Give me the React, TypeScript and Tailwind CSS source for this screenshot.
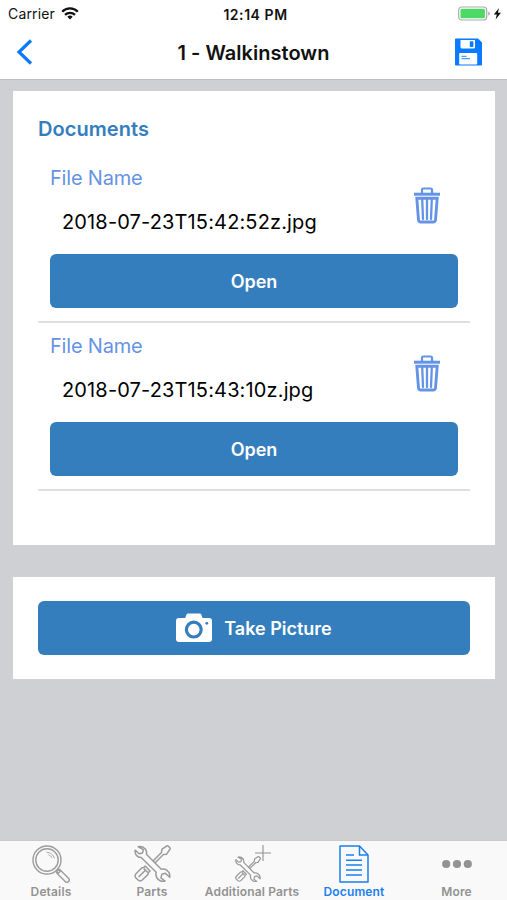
import * as React from "react";

interface DocumentItem {
  fileName: string;
}

const documents: DocumentItem[] = [
  { fileName: "2018-07-23T15:42:52z.jpg" },
  { fileName: "2018-07-23T15:43:10z.jpg" },
];

const WifiIcon = () => (
  <svg width="18" height="13" viewBox="0 0 18 13" fill="none" stroke="#111" strokeWidth="2.3">
    <path d="M1.2 4.7a11 11 0 0 1 15.6 0" />
    <path d="M4 7.8a7.2 7.2 0 0 1 10 0" />
    <path d="M6.3 9.7a4 4 0 0 1 5.4 0L9 12.6z" fill="#111" stroke="none" />
  </svg>
);

const BatteryIcon = () => (
  <svg width="45" height="16" viewBox="0 0 45 16">
    <rect x="0.7" y="1" width="28" height="13" rx="3" fill="#fff" stroke="#aaa" strokeWidth="1.2" />
    <rect x="2.5" y="2.8" width="24.4" height="9.4" rx="1.2" fill="#4cd964" />
    <path d="M30.4 5.5c1.8.6 1.8 3.6 0 4.2z" fill="#999" />
    <path d="M41 2l-5.2 6.6h3l-1.2 4.9 5.4-6.8h-3.1z" fill="#111" />
  </svg>
);

const SaveIcon = () => (
  <svg width="28" height="28" viewBox="0 0 28 28">
    <path d="M1 0.5h22l4 4V26.5a1 1 0 0 1-1 1H1a1 1 0 0 1-1-1v-25a1 1 0 0 1 1-1z" fill="#0a7aff" />
    <path d="M5.5 2H20V9a1.5 1.5 0 0 1-1.5 1.5H7A1.5 1.5 0 0 1 5.5 9z" fill="#fff" />
    <rect x="14.8" y="3.3" width="3.6" height="5.8" rx="0.8" fill="#0a7aff" />
    <rect x="4.2" y="15" width="18" height="11.5" rx="0.8" fill="#fff" />
    <path d="M6.5 18.4h5M6.5 20.6h8.5" stroke="#4a9cff" strokeWidth="1.4" />
  </svg>
);

const TrashIcon = () => (
  <svg width="26" height="37" viewBox="0 0 26 37" fill="none" stroke="#6593e6">
    <path d="M8 6V2.8A1.2 1.2 0 0 1 9.2 1.5h7.6A1.2 1.2 0 0 1 18 2.8V6" strokeWidth="2.2" />
    <path d="M0 7.2h26" strokeWidth="3" />
    <path d="M2.8 11.2h20.4L21.5 33a2.1 2.1 0 0 1-2.3 2H6.8a2.1 2.1 0 0 1-2.3-2z" strokeWidth="2.9" />
    <path d="M8.2 12l.8 20M13 12v20M17.8 12l-.8 20" strokeWidth="2.3" strokeLinecap="round" />
  </svg>
);

const CameraIcon = () => (
  <svg width="36" height="30" viewBox="0 0 36 30">
    <path
      d="M3 5h6.2l1.2-3.2A2 2 0 0 1 12.3.5h11.2a2 2 0 0 1 1.9 1.3L26.6 5H33a3 3 0 0 1 3 3v18a3 3 0 0 1-3 3H3a3 3 0 0 1-3-3V8a3 3 0 0 1 3-3z"
      fill="#fff"
    />
    <circle cx="17.8" cy="16.6" r="7.4" fill="none" stroke="#357ebd" strokeWidth="3.2" />
    <circle cx="30.8" cy="10.3" r="1.4" fill="#357ebd" />
  </svg>
);

const MagnifierIcon = () => (
  <svg width="38" height="38" viewBox="0 0 38 38" fill="none" stroke="#9c9c9c" strokeWidth="1.4">
    <circle cx="15" cy="15" r="14" />
    <circle cx="15" cy="15" r="11.2" />
    <path d="M14.5 7.3c3.8 0 7 2.6 7.9 6M16.5 9.8c1.7.6 2.7 1.5 3.4 3" strokeWidth="0.9" />
    <path d="M24.3 26.2l1.9-1.9 2 2-1.9 1.9z" />
    <path d="M25.4 28.7a2.2 2.2 0 0 1 3.3-3.3l7.8 7.8a2.2 2.2 0 0 1-3.3 3.3z" />
  </svg>
);

const ToolsIcon = ({ size }: { size: number }) => (
  <svg width={size} height={size} viewBox="0 0 38 38" fill="#f9f9f9" stroke="#9a9a9a" strokeWidth={size > 30 ? 1.5 : 1.8} strokeLinejoin="round">
    <path d="M19.5 16.5l8.7-8.7.4-3.3 4.8-3.3a1.6 1.6 0 0 1 2 .2l1.2 1.2a1.6 1.6 0 0 1 .2 2l-3.3 4.8-3.3.4-8.7 8.7z" />
    <path d="M11.5 21.6l5 5-1.4 1.4-.8 2.2-5.8 5.8a3 3 0 0 1-4.3 0l-2.2-2.2a3 3 0 0 1 0-4.3l5.9-5.9 2.2-.6z" />
    <path d="M4.8 32.8l6.6-6.6M10 24l4.2 4.2" fill="none" />
    <path d="M4.3 1.8C7.6.6 12.4 2.8 12.9 7c.1.8 0 1.6-.2 2.4L28 24.8c3.8-.9 8 1.6 8.7 5.8.2 1 .1 1.6 0 2.6l-4.5-4.2-3.6 1.1-1 3.7 4.3 3.3c-4.5 1.3-9.6-2.1-9.4-7.3 0-.7.1-1.2.3-1.8L7.4 12.8C3.6 13 .5 9.7 1.2 5.3L5.2 9l3.5-.8 1-3.5z" />
  </svg>
);

const PlusIcon = () => (
  <svg width="16" height="16" viewBox="0 0 16 16" stroke="#929292" strokeWidth="1.1">
    <path d="M8 0v16M0 8h16" />
  </svg>
);

const DocumentIcon = () => (
  <svg width="30" height="38" viewBox="0 0 30 38" fill="none" stroke="#1a80ee" strokeWidth="1.5">
    <path d="M1 1h19.5L29 10v27H1z" strokeLinejoin="round" />
    <path d="M20.5 1v9H29" />
    <path d="M7 10h8M7 15.2h16M7 20h16M7 25h16M7 30h16" />
  </svg>
);

const MoreIcon = () => (
  <svg width="30" height="10" viewBox="0 0 30 10" fill="#929292">
    <circle cx="4.2" cy="5" r="4.1" />
    <circle cx="15" cy="5" r="4.1" />
    <circle cx="25.8" cy="5" r="4.1" />
  </svg>
);

const StatusBar = () => (
  <div className="grid h-7 grid-cols-3 items-center">
    <div className="flex items-center gap-1.5 pb-px pl-2">
      <span className="text-[14px] tracking-[0.15px]">Carrier</span>
      <WifiIcon />
    </div>
    <span className="pl-1 text-center text-[14px] font-semibold tracking-[0.55px]">12:14 PM</span>
    <div className="flex justify-end pr-1 pb-px">
      <BatteryIcon />
    </div>
  </div>
);

const NavBar = () => (
  <div className="grid h-[50px] grid-cols-[60px_1fr_60px] items-center">
    <button className="pb-0.5 pl-4" aria-label="Back">
      <svg width="17" height="26" viewBox="0 0 17 26" fill="none" stroke="#0a7aff" strokeWidth="3.2">
        <path d="M15 1.5L3 13l12 11.5" />
      </svg>
    </button>
    <h1 className="pb-px text-center text-[20px] leading-6 font-semibold tracking-[0.03px]">1 - Walkinstown</h1>
    <button className="pb-0.5 pl-2" aria-label="Save">
      <SaveIcon />
    </button>
  </div>
);

const DocumentRow: React.FC<DocumentItem> = ({ fileName }) => (
  <li className="h-[168px] border-b-2 border-[#dedfe0] px-3">
    <div className="flex h-[99px] justify-between pt-[9px]">
      <div>
        <p className="text-[20px] leading-7 tracking-[-0.2px] text-[#6593e6]">File Name</p>
        <p className="mt-4 pl-3 text-[20px] leading-7 tracking-[0.14px] text-black">{fileName}</p>
      </div>
      <button className="mt-[23px] mr-[18px] h-[37px]" aria-label="Delete">
        <TrashIcon />
      </button>
    </div>
    <button className="h-[54px] w-full rounded-md bg-[#357ebd] text-[18px] font-semibold text-white">Open</button>
  </li>
);

interface TabProps {
  label: string;
  active?: boolean;
  children: React.ReactNode;
}

const Tab: React.FC<TabProps> = ({ label, active, children }) => (
  <button className={active ? "flex flex-col items-center text-[#1a80ee]" : "flex flex-col items-center text-[#929292]"}>
    <span className="flex h-[45px] items-center">{children}</span>
    <span className="text-[12px] leading-3 font-semibold tracking-[0.15px] whitespace-nowrap">{label}</span>
  </button>
);

export default function App() {
  return (
    <div className="flex h-[900px] w-[507px] flex-col overflow-hidden bg-[#cfd0d4] font-['Inter','Liberation_Sans',sans-serif] text-[#111]">
      <header className="h-20 shrink-0 border-b border-[#bebfc2] bg-white">
        <StatusBar />
        <NavBar />
      </header>

      <main className="flex flex-1 flex-col gap-8 pt-[11px] pr-3 pl-[13px]">
        <section className="h-[454px] bg-white px-[25px] pt-6">
          <h2 className="text-[20px] leading-7 font-semibold tracking-[0.05px] text-[#357ebd]">Documents</h2>
          <ul className="mt-3">
            {documents.map((doc) => (
              <DocumentRow key={doc.fileName} {...doc} />
            ))}
          </ul>
        </section>

        <section className="h-[102px] bg-white px-[25px] pt-6">
          <button className="flex h-[54px] w-full items-center justify-center gap-3 rounded-md bg-[#357ebd] text-[18px] font-semibold text-white">
            <CameraIcon />
            Take Picture
          </button>
        </section>
      </main>

      <nav className="grid h-[60px] shrink-0 grid-cols-[102px_100px_100px_104px_101px] border-t border-[#c8c9cc] bg-[#f9f9f9]">
        <Tab label="Details">
          <MagnifierIcon />
        </Tab>
        <Tab label="Parts">
          <ToolsIcon size={37} />
        </Tab>
        <Tab label="Additional Parts">
          <span className="relative mt-2.5 mr-2">
            <ToolsIcon size={26} />
            <span className="absolute -top-[11px] -right-[10px]">
              <PlusIcon />
            </span>
          </span>
        </Tab>
        <Tab label="Document" active>
          <DocumentIcon />
        </Tab>
        <Tab label="More">
          <MoreIcon />
        </Tab>
      </nav>
    </div>
  );
}
